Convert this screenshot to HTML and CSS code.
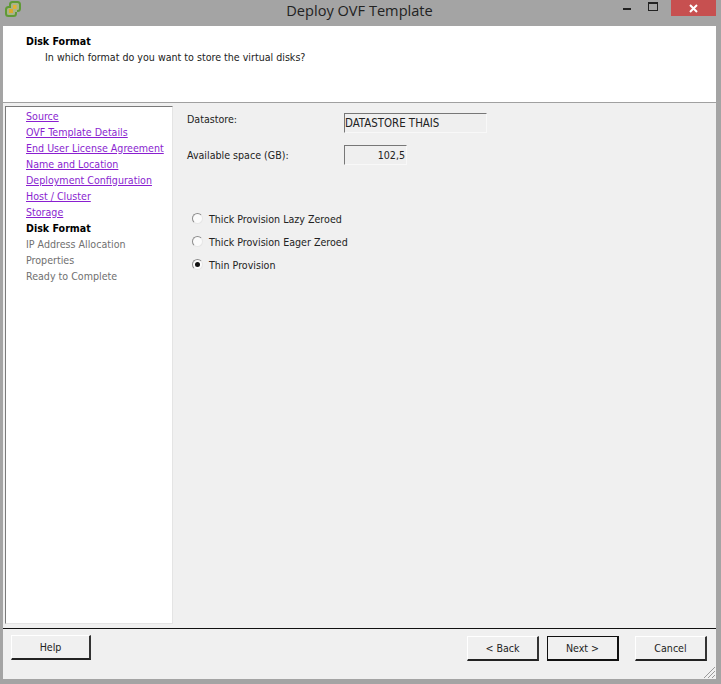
FILE: index.html
```html
<!DOCTYPE html>
<html lang="en">
<head>
<meta charset="utf-8">
<title>Deploy OVF Template</title>
<link rel="stylesheet" href="styles.css">
</head>
<body>
<div class="window">
  <div class="titlebar">
    <svg class="app-icon" width="18" height="18" viewBox="0 0 18 18">
      <rect x="6" y="2" width="10" height="9" rx="2.500" fill="#a9b48a" stroke="#5f9a35" stroke-width="2"/>
      <rect x="2" y="7" width="10" height="9" rx="2.500" fill="#a9b48a" stroke="#5f9a35" stroke-width="2"/>
      <rect x="7" y="6" width="6" height="6" fill="#a9b48a"/>
      <rect x="5" y="9" width="4" height="4" fill="#dca92c"/>
      <rect x="9" y="5" width="3.500" height="4" fill="#e2b234"/>
    </svg>
    <div class="title">Deploy OVF Template</div>
    <div class="controls">
      <span class="minimize"></span>
      <span class="maximize"></span>
      <span class="close">
        <svg width="9" height="9" viewBox="0 0 9 9"><path d="M1 1L8 8M8 1L1 8" stroke="#fff" stroke-width="2"/></svg>
      </span>
    </div>
  </div>
  <div class="client">
    <header class="header">
      <div class="header-title">Disk Format</div>
      <div class="header-sub">In which format do you want to store the virtual disks?</div>
    </header>
    <div class="middle">
      <nav class="steps">
        <a class="step done">Source</a>
        <a class="step done">OVF Template Details</a>
        <a class="step done">End User License Agreement</a>
        <a class="step done">Name and Location</a>
        <a class="step done">Deployment Configuration</a>
        <a class="step done">Host / Cluster</a>
        <a class="step done">Storage</a>
        <span class="step current">Disk Format</span>
        <span class="step todo">IP Address Allocation</span>
        <span class="step todo">Properties</span>
        <span class="step todo">Ready to Complete</span>
      </nav>
      <main class="content">
        <div class="fields">
          <div class="field-label">Datastore:</div>
          <div class="readonly wide">DATASTORE THAIS</div>
          <div class="field-label low">Available space (GB):</div>
          <div class="readonly narrow">102,5</div>
        </div>
        <div class="radios">
          <div class="radio-row"><span class="radio"></span>Thick Provision Lazy Zeroed</div>
          <div class="radio-row"><span class="radio"></span>Thick Provision Eager Zeroed</div>
          <div class="radio-row"><span class="radio checked"></span>Thin Provision</div>
        </div>
      </main>
    </div>
    <footer class="footer">
      <button class="btn help">Help</button>
      <div class="nav-buttons">
        <button class="btn">&lt; Back</button>
        <button class="btn default">Next &gt;</button>
        <button class="btn cancel">Cancel</button>
      </div>
    </footer>
    <svg class="grip" width="13" height="13" viewBox="0 0 13 13"><path d="M12 1L1 12M12 5L5 12M12 9L9 12" stroke="#9a9a9a" stroke-width="1"/></svg>
  </div>
</div>
</body>
</html>
```
FILE: styles.css
```css
* { box-sizing: border-box; }
html, body { margin: 0; padding: 0; }
body {
  width: 721px;
  height: 684px;
  background: #a4a4a4;
  overflow: hidden;
  font-family: "DejaVu Sans", sans-serif;
  font-stretch: condensed;
  font-size: 10.6px;
  color: #111;
}
.window { display: flex; flex-direction: column; height: 684px; }
.titlebar {
  position: relative;
  height: 26px;
  flex: none;
  display: flex;
  justify-content: center;
}
.app-icon { position: absolute; left: 4px; top: 0; }
.title { font-family: "Open Sans", sans-serif; font-stretch: normal; font-size: 14.6px; line-height: 21px; color: #222; margin-right: 2px; }
.controls { position: absolute; right: 5px; top: 0; display: flex; align-items: flex-start; }
.minimize { width: 8px; height: 2px; background: #222; margin: 8px 17px 0 0; }
.maximize { width: 10px; height: 9px; border: 1px solid #222; border-top-width: 2px; margin: 2px 13px 0 0; }
.close {
  width: 45px; height: 16px; background: #c75050;
  display: flex; align-items: center; justify-content: center;
}
.client {
  position: relative;
  flex: 1;
  margin: 0 5px 5px 3px;
  background: #f0f0f0;
  display: flex;
  flex-direction: column;
  min-height: 0;
}
.header {
  height: 77px;
  flex: none;
  background: #fff;
  border-bottom: 1px solid #a0a0a0;
  padding: 8px 0 0 23px;
}
.header-title { font-weight: 700; line-height: 14px; color: #000; }
.header-sub { margin: 2px 0 0 19px; line-height: 14px; color: #222; }
.middle { flex: 1; display: flex; min-height: 0; padding: 3px 0 4px 2px; }
.steps {
  width: 168px;
  flex: none;
  background: #fff;
  border: 1px solid #e4e4e4;
  border-top: 1px solid #7a7a7a;
  border-left: 1px solid #7a7a7a;
  padding: 2px 0 0 20px;
  display: flex;
  flex-direction: column;
}
.step { display: block; height: 16px; line-height: 15px; white-space: nowrap; }
.done { color: #8a1fd0; text-decoration: underline; }
.current { color: #000; font-weight: 700; }
.todo { color: #707070; }
.content { flex: 1; padding: 7px 0 0 14px; }
.fields {
  display: grid;
  grid-template-columns: 157px auto;
  justify-content: start;
  row-gap: 12px;
  align-items: start;
}
.field-label { line-height: 15px; color: #222; margin-top: -1px; }
.field-label.low { padding-top: 4px; }
.readonly {
  height: 20px;
  line-height: 19px;
  border: 1px solid #f8f8f8;
  border-top: 1px solid #777;
  border-left: 1px solid #777;
  background: #efefef;
  color: #222;
  white-space: nowrap;
}
.wide { width: 143px; padding-left: 0; font-size: 11.4px; }
.narrow { width: 63px; text-align: right; padding-right: 1px; }
.radios { margin-top: 46px; padding-left: 5px; display: flex; flex-direction: column; gap: 8px; }
.radio-row { display: flex; align-items: center; height: 15px; color: #222; white-space: nowrap; }
.radio {
  position: relative;
  width: 11px;
  height: 11px;
  border-radius: 50%;
  background: #fbfbfb;
  border: 1px solid #8c8c8c;
  border-right-color: #e6e6e6;
  border-bottom-color: #e6e6e6;
  margin-right: 6px;
  flex: none;
}
.checked::after {
  content: "";
  position: absolute;
  left: 2px;
  top: 2px;
  width: 5px;
  height: 5px;
  border-radius: 50%;
  background: #111;
}
.footer {
  height: 51px;
  flex: none;
  border-top: 1px solid #111;
  padding: 6px 9px 0 8px;
  display: flex;
  justify-content: space-between;
  align-items: flex-start;
}
.nav-buttons { display: flex; padding-top: 1px; }
.btn {
  width: 72px;
  height: 25px;
  padding: 0;
  background: #f0f0f0;
  border: 1px solid #fff;
  border-right: 2px solid #333;
  border-bottom: 2px solid #222;
  font: inherit;
  font-stretch: condensed;
  color: #222;
}
.btn + .btn { margin-left: 8px; }
.btn.cancel { margin-left: 16px; }
.btn.help { width: 80px; }
.btn.default { border: 1px solid #111; border-right: 2px solid #111; border-bottom: 2px solid #111; }
.grip { position: absolute; right: 0; bottom: 0; }
```
